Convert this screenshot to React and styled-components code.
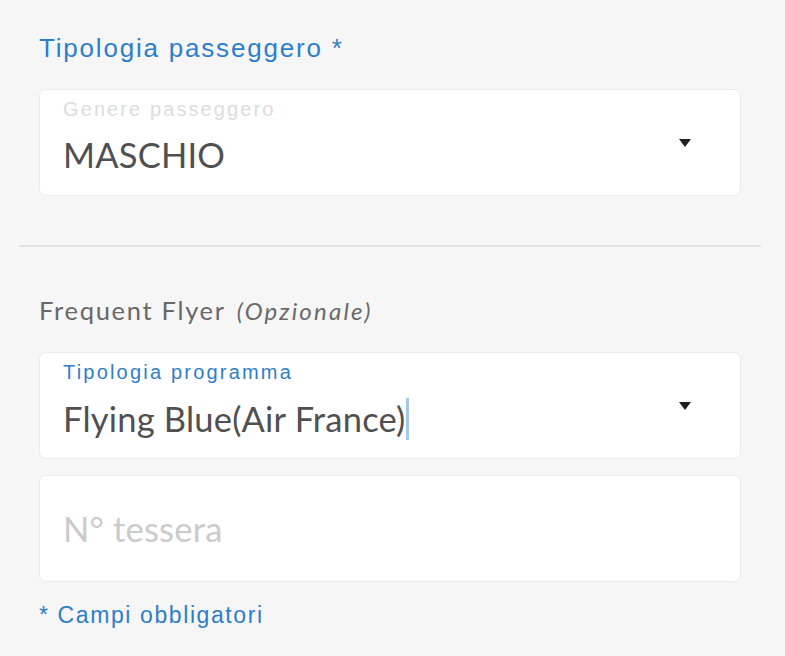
import React from "react";
import styled, { createGlobalStyle } from "styled-components";

const Global = createGlobalStyle`
  html, body { margin: 0; padding: 0; background: #f6f6f6; }
  body { font-family: Lato, "Noto Sans", sans-serif; }
`;

const Page = styled.div`
  width: 785px;
  height: 656px;
  background: #f6f6f6;
  box-sizing: border-box;
  padding: 0 24px 0 19px;
  display: flex;
  flex-direction: column;
`;

const Section = styled.div`
  padding: 0 20px;
  display: flex;
  flex-direction: column;
`;

const BlueTitle = styled.div`
  font-family: "Liberation Sans", Arial, sans-serif;
  color: #2d7ecb;
  font-size: 26px;
  line-height: 30px;
  letter-spacing: 1.8px;
  margin-top: 33px;
  margin-bottom: 26px;
`;

const PlainTitle = styled.div`
  color: #686868;
  font-size: 25.5px;
  line-height: 30px;
  letter-spacing: 1.7px;
  margin-top: 48px;
  margin-bottom: 26px;
  display: flex;
  align-items: baseline;
  gap: 11px;
`;

const Optional = styled.span`
  font-style: italic;
  font-size: 24px;
  letter-spacing: 2.2px;
  color: #6a6a6a;
`;

const Field = styled.div`
  background: #fff;
  border: 1px solid #ebebeb;
  border-radius: 7px;
  height: 107px;
  box-sizing: border-box;
  display: flex;
  align-items: center;
  padding: 0 49px 0 23px;
  margin-bottom: ${(p) => p.$mb || 0}px;
`;

const FieldBody = styled.div`
  flex: 1;
  align-self: stretch;
  display: flex;
  flex-direction: column;
  justify-content: ${(p) => (p.$center ? "center" : "flex-start")};
  padding-top: ${(p) => (p.$center ? 0 : 7)}px;
`;

const FloatLabel = styled.div`
  font-family: "Liberation Sans", Arial, sans-serif;
  font-size: 20px;
  line-height: 24px;
  letter-spacing: ${(p) => (p.$active ? 2.2 : 2.1)}px;
  color: ${(p) => (p.$active ? "#2d7ecb" : "#dcdcdc")};
  margin-bottom: 14px;
`;

const Value = styled.div`
  font-size: 34.5px;
  line-height: 40px;
  letter-spacing: 0.2px;
  color: ${(p) => (p.$placeholder ? "#cbcbcb" : "#505050")};
  display: flex;
  align-items: center;
`;

const Caret = styled.span`
  display: inline-block;
  width: 3px;
  height: 42px;
  background: #a5c6ea;
`;

const Arrow = styled.svg`
  width: 12px;
  height: 8px;
  flex-shrink: 0;
`;

const Divider = styled.div`
  height: 2px;
  background: #e4e4e4;
  margin-top: 49px;
`;

const Footnote = styled.div`
  font-family: "Liberation Sans", Arial, sans-serif;
  color: #2d7ecb;
  font-size: 23px;
  line-height: 28px;
  letter-spacing: 1.6px;
  margin-top: 19px;
`;

const DownArrow = () => (
  <Arrow viewBox="0 0 12 8">
    <path d="M0 0 H12 L6 8 Z" fill="#1e1e1e" />
  </Arrow>
);

export default function App() {
  return (
    <>
      <Global />
      <Page>
        <Section>
          <BlueTitle>Tipologia passeggero *</BlueTitle>
          <Field>
            <FieldBody>
              <FloatLabel>Genere passeggero</FloatLabel>
              <Value>MASCHIO</Value>
            </FieldBody>
            <DownArrow />
          </Field>
        </Section>
        <Divider />
        <Section>
          <PlainTitle>
            Frequent Flyer <Optional>(Opzionale)</Optional>
          </PlainTitle>
          <Field $mb={16}>
            <FieldBody>
              <FloatLabel $active>Tipologia programma</FloatLabel>
              <Value>
                Flying Blue(Air France)
                <Caret />
              </Value>
            </FieldBody>
            <DownArrow />
          </Field>
          <Field>
            <FieldBody $center>
              <Value $placeholder>N° tessera</Value>
            </FieldBody>
          </Field>
          <Footnote>* Campi obbligatori</Footnote>
        </Section>
      </Page>
    </>
  );
}
